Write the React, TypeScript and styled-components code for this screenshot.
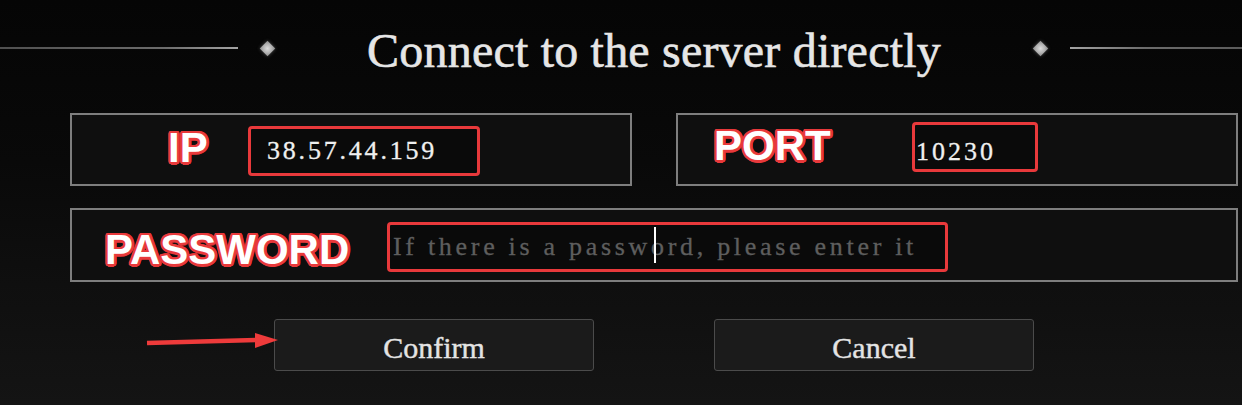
import React from "react";
import styled, { createGlobalStyle } from "styled-components";

const Global = createGlobalStyle`
  html, body { margin: 0; padding: 0; overflow: hidden; background: #080808; }
  #root { width: 1242px; height: 405px; }
`;

const outline = Array.from({ length: 16 }, (_, i) => {
  const a = (i * Math.PI) / 8;
  return `${(Math.cos(a) * 2.5).toFixed(2)}px ${(Math.sin(a) * 2.5).toFixed(2)}px 0 #e8393b`;
})
  .concat(["0 0 1px #e8393b"])
  .join(", ");

const Page = styled.div`
  width: 1242px;
  height: 405px;
  overflow: hidden;
  display: flex;
  background: linear-gradient(180deg, #050505 0%, #090909 40%, #0f0f0f 70%, #141414 100%);
`;

const Dialog = styled.div`
  margin-left: 70px;
  width: 1168px;
  padding-top: 23px;
  display: flex;
  flex-direction: column;
`;

const Header = styled.div`
  margin: 0 -80px;
  height: 56px;
  display: flex;
  align-items: center;
`;

const Rule = styled.div<{ $side: "left" | "right" }>`
  flex: 1;
  height: 2px;
  margin-bottom: 6px;
  background: linear-gradient(
    ${(p) => (p.$side === "left" ? "90deg" : "270deg")},
    #4e4e4e 0%,
    #6c6c6c 70%,
    #a4a4a4 100%
  );
`;

const Gem = styled.span<{ $side: "left" | "right" }>`
  flex: none;
  width: 18px;
  height: 18px;
  margin: ${(p) => (p.$side === "left" ? "0 0 6px 20px" : "0 20px 6px 0")};
  display: flex;
  align-items: center;
  justify-content: center;
  &::before {
    content: "";
    width: 11px;
    height: 11px;
    transform: rotate(45deg);
    background: radial-gradient(circle, #dcdcdc 0%, #b4b4b4 55%, #8a8a8a 100%);
    box-shadow: 0 0 4px rgba(200, 200, 200, 0.35);
  }
`;

const Title = styled.h1`
  margin: 0;
  padding: 0 91px;
  flex: none;
  white-space: nowrap;
  font: normal 48px/56px "Liberation Serif", "Times New Roman", serif;
  letter-spacing: 0.2px;
  color: #e6e6e6;
  -webkit-text-stroke: 0.6px #e6e6e6;
`;

const FieldGrid = styled.div`
  margin-top: 34px;
  display: grid;
  grid-template-columns: 1fr 1fr;
  gap: 44px;
`;

const Box = styled.div<{ $h: number; $pad: number; $mt?: number }>`
  box-sizing: border-box;
  height: ${(p) => p.$h}px;
  margin-top: ${(p) => p.$mt ?? 0}px;
  padding-left: ${(p) => p.$pad}px;
  border: 2px solid #7e7e7e;
  background: #0f0f0f;
  display: flex;
  align-items: center;
`;

const Label = styled.span<{ $w: number; $dy: number }>`
  flex: none;
  width: ${(p) => p.$w}px;
  margin-top: ${(p) => p.$dy}px;
  font: bold 42px/42px "Liberation Sans", Arial, sans-serif;
  color: #ffffff;
  text-shadow: ${outline};
`;

const Field = styled.div<{ $w: number; $dy: number; $px: number; $pt?: number }>`
  position: relative;
  box-sizing: border-box;
  flex: none;
  width: ${(p) => p.$w}px;
  height: 50px;
  margin-top: ${(p) => p.$dy}px;
  padding: ${(p) => p.$pt ?? 0}px 0 0 ${(p) => p.$px}px;
  border: 3px solid #e8393b;
  border-radius: 4px;
  background: #0a0a0a;
  display: flex;
  align-items: center;
`;

const Input = styled.input<{ $ls: number }>`
  width: 100%;
  padding: 0;
  border: none;
  outline: none;
  background: transparent;
  font: normal 26px "Liberation Serif", "Times New Roman", serif;
  letter-spacing: ${(p) => p.$ls}px;
  color: #f0f0f0;
  -webkit-text-stroke: 0.3px currentColor;
  &::placeholder {
    color: #5e5e5e;
  }
`;

const Caret = styled.span`
  position: absolute;
  left: 264px;
  top: 2px;
  width: 2px;
  height: 36px;
  background: #ffffff;
`;

const ButtonRow = styled.div`
  position: relative;
  margin-top: 37px;
  display: flex;
  justify-content: center;
  gap: 120px;
`;

const Button = styled.button`
  box-sizing: border-box;
  width: 320px;
  height: 52px;
  padding: 6px 0 0;
  border: 1px solid #4b4b4b;
  border-radius: 3px;
  background: #1b1b1b;
  color: #e4e4e4;
  font: normal 30px "Liberation Serif", "Times New Roman", serif;
  -webkit-text-stroke: 0.4px #e4e4e4;
  cursor: pointer;
`;

const Arrow = styled.svg`
  position: absolute;
  left: 77px;
  top: 13px;
  overflow: visible;
`;

export default function App() {
  return (
    <>
      <Global />
      <Page>
        <Dialog>
          <Header>
            <Rule $side="left" />
            <Gem $side="left" />
            <Title>Connect to the server directly</Title>
            <Gem $side="right" />
            <Rule $side="right" />
          </Header>

          <FieldGrid>
            <Box $h={73} $pad={96}>
              <Label $w={80} $dy={-3}>IP</Label>
              <Field $w={232} $dy={3} $px={16}>
                <Input $ls={2.8} readOnly value="38.57.44.159" />
              </Field>
            </Box>
            <Box $h={73} $pad={36}>
              <Label $w={198} $dy={-8}>PORT</Label>
              <Field $w={126} $dy={-5} $px={1} $pt={9}>
                <Input $ls={3} readOnly value="10230" />
              </Field>
            </Box>
          </FieldGrid>

          <Box $h={74} $pad={33} $mt={22}>
            <Label $w={282} $dy={9}>PASSWORD</Label>
            <Field $w={561} $dy={4} $px={3}>
              <Input $ls={3.7} readOnly placeholder="If there is a password, please enter it" />
              <Caret />
            </Field>
          </Box>

          <ButtonRow>
            <Arrow width="133" height="18" viewBox="0 0 133 18">
              <line x1="0" y1="11" x2="112" y2="8" stroke="#ee3b3b" strokeWidth="4.5" />
              <polygon points="108,1 131,8 108,16" fill="#ee3b3b" />
            </Arrow>
            <Button>Confirm</Button>
            <Button>Cancel</Button>
          </ButtonRow>
        </Dialog>
      </Page>
    </>
  );
}
